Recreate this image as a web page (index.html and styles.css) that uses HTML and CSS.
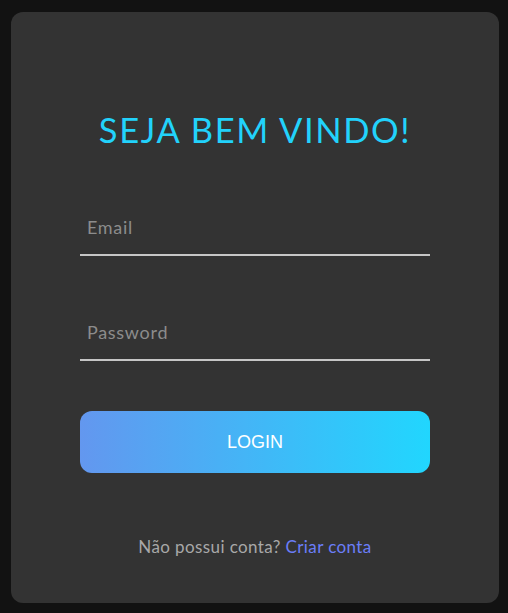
FILE: index.html
```html
<!DOCTYPE html>
<html lang="pt-BR">
<head>
<meta charset="utf-8">
<title>Login</title>
<link rel="stylesheet" href="styles.css">
</head>
<body>
<main class="card">
  <h1 class="title">SEJA BEM VINDO!</h1>
  <form class="form">
    <input class="field" type="email" placeholder="Email">
    <input class="field" type="password" placeholder="Password">
    <button class="login" type="button">LOGIN</button>
  </form>
  <p class="signup">Não possui conta? <a class="signup-link" href="#">Criar conta</a></p>
</main>
</body>
</html>
```

FILE: styles.css
```css
html, body {
  margin: 0;
  padding: 0;
  background: #121212;
}

body {
  padding: 12px 0 0 11px;
  font-family: "Lato", "Noto Sans", sans-serif;
}

.card {
  box-sizing: border-box;
  width: 488px;
  height: 591px;
  background: #333333;
  border-radius: 12px;
  padding: 94px 69px 0 69px;
  display: flex;
  flex-direction: column;
}

.title {
  margin: 0;
  font-size: 34.5px;
  line-height: 48px;
  font-weight: 400;
  letter-spacing: 1.6px;
  color: #22d2fb;
  text-align: center;
}

.form {
  display: flex;
  flex-direction: column;
  margin-top: 46px;
}

.field {
  box-sizing: border-box;
  height: 56px;
  padding: 0 7px;
  border: none;
  border-bottom: 2px solid #c6c6c6;
  background: transparent;
  font-family: "Lato", "Noto Sans", sans-serif;
  font-size: 18px;
  letter-spacing: 0.7px;
  color: #e0e0e0;
  outline: none;
}

.field::placeholder {
  color: #8c8c8c;
}

.field + .field {
  margin-top: 49px;
}

.login {
  margin-top: 50px;
  height: 62px;
  border: none;
  border-radius: 12px;
  background: linear-gradient(to right, #6397ef, #21d6fe);
  color: #ffffff;
  font-family: "Liberation Sans", Arial, sans-serif;
  font-size: 18px;
  cursor: pointer;
}

.signup {
  margin: 64px 0 0;
  text-align: center;
  font-size: 17px;
  line-height: 20px;
  letter-spacing: 0.4px;
  color: #a8a8a8;
}

.signup-link {
  color: #6b7ef8;
  text-decoration: none;
}
```
